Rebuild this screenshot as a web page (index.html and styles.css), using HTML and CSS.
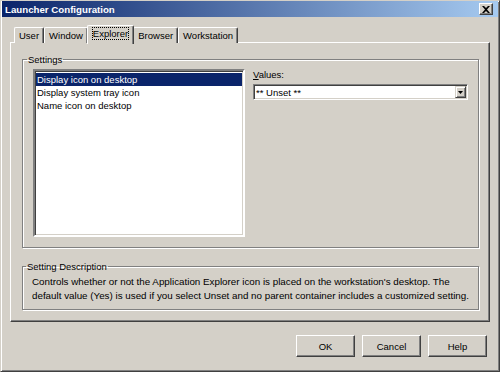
FILE: index.html
```html
<!DOCTYPE html>
<html lang="en">
<head>
  <meta charset="UTF-8">
  <title>Launcher Configuration</title>
  <link rel="stylesheet" href="styles.css">
</head>
<body>

<div class="window">
  <div class="titlebar">
    <span class="title">Launcher Configuration</span>
    <span class="close-btn">
      <svg width="8" height="7" viewBox="0 0 8 7"><path d="M0 0h2l2 2 2-2h2L5 3.5 8 7H6L4 5 2 7H0l3-3.5z" fill="#000"/></svg>
    </span>
  </div>

  <div class="content">
    <div class="tabs">
      <div class="tab">User</div>
      <div class="tab">Window</div>
      <div class="tab selected"><span class="focus">Explorer</span></div>
      <div class="tab">Browser</div>
      <div class="tab">Workstation</div>
    </div>

    <div class="tab-panel">
      <fieldset class="group">
        <legend>Settings</legend>
        <div class="settings-row">
          <div class="listbox">
            <div class="list-item selected">Display icon on desktop</div>
            <div class="list-item">Display system tray icon</div>
            <div class="list-item">Name icon on desktop</div>
          </div>
          <div class="values">
            <label class="values-label"><u>V</u>alues:</label>
            <div class="combo">
              <span class="combo-text">** Unset **</span>
              <span class="combo-btn">
                <svg width="5" height="3" viewBox="0 0 5 3"><path d="M0 0h5L2.5 3z" fill="#000"/></svg>
              </span>
            </div>
          </div>
        </div>
      </fieldset>

      <fieldset class="group desc">
        <legend>Setting Description</legend>
        <p class="desc-text">Controls whether or not the Application Explorer icon is placed on the workstation's desktop. The<br>default value (Yes) is used if you select Unset and no parent container includes a customized setting.</p>
      </fieldset>
    </div>

    <div class="buttons">
      <button class="btn">OK</button>
      <button class="btn">Cancel</button>
      <button class="btn">Help</button>
    </div>
  </div>
</div>

</body>
</html>
```

FILE: styles.css
```css
body {
  margin: 0;
  font-family: "Liberation Sans", Arial, sans-serif;
  font-size: 9.5px;
  color: #000;
  background: #d4d0c8;
}
.window {
  width: 500px;
  height: 372px;
  box-sizing: border-box;
  background: #d4d0c8;
  border: 1px solid;
  border-color: #d4d0c8 #404040 #404040 #d4d0c8;
  box-shadow: inset 1px 1px #fff, inset -1px -1px #808080;
}
.titlebar {
  height: 16px;
  margin: 0 1px;
  display: flex;
  align-items: center;
  justify-content: space-between;
  padding: 0 5px 0 3px;
  background: linear-gradient(to right, #0a246a, #a6caf0);
}
.title {
  color: #fff;
  font-weight: bold;
  font-size: 9.7px;
}
.close-btn {
  width: 14px;
  height: 12px;
  box-sizing: border-box;
  display: flex;
  align-items: center;
  justify-content: center;
  background: #d4d0c8;
  border: 1px solid;
  border-color: #fff #404040 #404040 #fff;
  box-shadow: inset -1px -1px #808080;
}
.content {
  padding: 8px 9px 0 9px;
}
.tabs {
  display: flex;
  height: 18px;
  padding-left: 4px;
  margin-bottom: -1px;
  align-items: flex-start;
}
.tab {
  margin-top: 2px;
  height: 16px;
  line-height: 16px;
  padding: 0 4px;
  box-sizing: border-box;
  border: 1px solid;
  border-bottom: none;
  border-color: #fff #404040 #404040 #fff;
  box-shadow: inset -1px 0 #808080;
  border-radius: 2px 2px 0 0;
  background: #d4d0c8;
}
.tab.selected {
  position: relative;
  z-index: 1;
  margin: 0 -1px;
  height: 19px;
  padding: 1px 5px 0;
  line-height: 14px;
}
.focus {
  outline: 1px dotted #000;
}
.tab-panel {
  height: 280px;
  box-sizing: border-box;
  padding: 10px 10px 0 11px;
  border: 1px solid;
  border-color: #fff #404040 #404040 #fff;
  box-shadow: inset -1px -1px #808080;
}
.group {
  margin: 0;
  padding: 3px 10px 10px 10px;
  border: 1px solid #808080;
  box-shadow: inset 1px 1px #fff, 1px 1px #fff;
}
.group legend {
  margin-left: -6px;
  padding: 0 1px;
  line-height: 13px;
}
.settings-row {
  display: flex;
  gap: 8px;
}
.listbox {
  width: 212px;
  height: 168px;
  box-sizing: border-box;
  background: #fff;
  border: 2px solid;
  border-color: #808080 #fff #fff #808080;
  box-shadow: inset 1px 1px #404040, inset -1px -1px #d4d0c8;
  padding: 2px 1px 0 1px;
}
.list-item {
  line-height: 13px;
  padding-left: 1px;
}
.list-item.selected {
  background: #0a246a;
  color: #fff;
}
.values {
  flex: 1;
}
.values-label {
  display: block;
  line-height: 13px;
  margin-top: -1px;
}
.combo {
  margin-top: 3px;
  height: 16px;
  box-sizing: border-box;
  display: flex;
  align-items: center;
  justify-content: space-between;
  background: #fff;
  border: 1px solid;
  border-color: #808080 #fff #fff #808080;
  box-shadow: inset 1px 1px #404040, inset -1px -1px #d4d0c8;
  padding: 1px 1px 1px 2px;
}
.combo-btn {
  width: 11px;
  height: 12px;
  box-sizing: border-box;
  display: flex;
  align-items: center;
  justify-content: center;
  background: #d4d0c8;
  border: 1px solid;
  border-color: #d4d0c8 #404040 #404040 #d4d0c8;
  box-shadow: inset 1px 1px #fff, inset -1px -1px #808080;
}
.group.desc {
  margin-top: 12px;
  padding: 2px 4px 6px 9px;
}
.desc-text {
  margin: 0;
  font-size: 9.8px;
  line-height: 14px;
  white-space: nowrap;
}
.buttons {
  display: flex;
  justify-content: flex-end;
  gap: 7px;
  margin-top: 13px;
  padding-right: 3px;
}
.btn {
  width: 59px;
  height: 22px;
  font-family: inherit;
  font-size: 9.5px;
  color: #000;
  background: #d4d0c8;
  border: 1px solid;
  border-color: #fff #404040 #404040 #fff;
  box-shadow: inset -1px -1px #808080;
  padding: 0;
}
```
